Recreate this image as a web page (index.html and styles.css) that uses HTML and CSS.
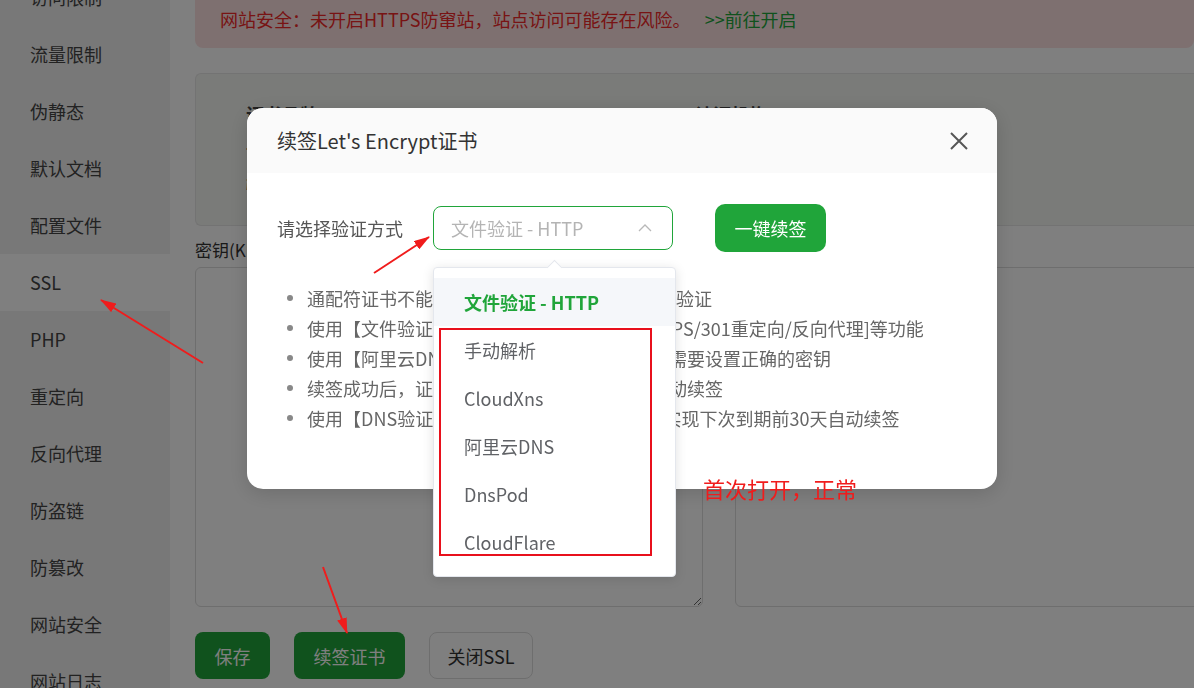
FILE: index.html
```html
<!DOCTYPE html>
<html>

<head>
    <meta charset="utf-8">
    <title>SSL</title>
    <link rel="stylesheet" href="styles.css">
</head>

<body>
    <div class="page">
        <div class="side">
            <div class="side-list">
                <div class="side-item">访问限制</div>
                <div class="side-item">流量限制</div>
                <div class="side-item">伪静态</div>
                <div class="side-item">默认文档</div>
                <div class="side-item">配置文件</div>
                <div class="side-item active">SSL</div>
                <div class="side-item">PHP</div>
                <div class="side-item">重定向</div>
                <div class="side-item">反向代理</div>
                <div class="side-item">防盗链</div>
                <div class="side-item">防篡改</div>
                <div class="side-item">网站安全</div>
                <div class="side-item">网站日志</div>
            </div>
        </div>
        <div class="main">
            <div class="alert">
                <span class="alert-text">网站安全：未开启HTTPS防窜站，站点访问可能存在风险。</span>
                <span class="alert-link">&gt;&gt;前往开启</span>
            </div>
            <div class="cert-info">
                <div class="cert-row">
                    <div class="cert-cell">证书品牌：<span class="green">Let's Encrypt</span></div>
                    <div class="cert-cell">认证机构：R10</div>
                </div>
                <div class="cert-row">
                    <div class="cert-cell">认证域名：www.example.com</div>
                    <div class="cert-cell">到期时间：2024-11-20</div>
                </div>
                <div class="cert-row">
                    <div class="cert-cell">强制HTTPS：<span class="switch"></span></div>
                </div>
            </div>
            <div class="key-row">
                <div class="key-col">
                    <div class="key-label">密钥(KEY)</div>
                    <textarea class="key-box"></textarea>
                </div>
                <div class="key-col wide">
                    <div class="key-label">证书(PEM格式)</div>
                    <textarea class="key-box"></textarea>
                </div>
            </div>
            <div class="actions">
                <button class="btn btn-green btn-save">保存</button>
                <button class="btn btn-green btn-renew">续签证书</button>
                <button class="btn btn-plain">关闭SSL</button>
            </div>
        </div>
    </div>

    <div class="mask"></div>

    <div class="dialog">
        <div class="dialog-head">
            <span class="dialog-title">续签Let's Encrypt证书</span>
            <svg class="dialog-close" width="20" height="20" viewBox="0 0 20 20">
                <path d="M2 2 L18 18 M18 2 L2 18" stroke="#555" stroke-width="2" fill="none" />
            </svg>
        </div>
        <div class="dialog-body">
            <div class="form-row">
                <span class="form-label">请选择验证方式</span>
                <div class="select">
                    <span class="select-text">文件验证 - HTTP</span>
                    <svg class="select-arrow" width="14" height="8" viewBox="0 0 14 8">
                        <path d="M1 7 L7 1 L13 7" stroke="#b8b8b8" stroke-width="1.3" fill="none" />
                    </svg>
                    <div class="dropdown">
                        <div class="dropdown-item selected">文件验证 - HTTP</div>
                        <div class="dropdown-item">手动解析</div>
                        <div class="dropdown-item">CloudXns</div>
                        <div class="dropdown-item">阿里云DNS</div>
                        <div class="dropdown-item">DnsPod</div>
                        <div class="dropdown-item">CloudFlare</div>
                    </div>
                </div>
                <button class="btn-renew-now">一键续签</button>
            </div>
            <ul class="tips">
                <li>通配符证书不能使用【文件验证】，请选择DNS验证</li>
                <li>使用【文件验证】时，请确保网站没开启[HTTPS/301重定向/反向代理]等功能</li>
                <li>使用【阿里云DNS】【DnsPod】等验证方式时需要设置正确的密钥</li>
                <li>续签成功后，证书将于到期前30天内由面板自动续签</li>
                <li>使用【DNS验证 - 手动解析】续签的证书无法实现下次到期前30天自动续签</li>
            </ul>
        </div>
    </div>

    <!-- annotations drawn on top of the screenshot -->
    <svg class="marks" width="1194" height="688" viewBox="0 0 1194 688">
        <defs>
            <marker id="head" markerWidth="8" markerHeight="5" refX="7.5" refY="2.5" orient="auto"
                markerUnits="strokeWidth">
                <path d="M0 0 L8 2.5 L0 5 Z" fill="#f01c1c" />
            </marker>
        </defs>
        <line x1="374" y1="273" x2="429" y2="237" stroke="#f01c1c" stroke-width="2" marker-end="url(#head)" />
        <line x1="203" y1="363" x2="101" y2="300" stroke="#f01c1c" stroke-width="2" marker-end="url(#head)" />
        <line x1="323" y1="567" x2="347" y2="633" stroke="#f01c1c" stroke-width="2" marker-end="url(#head)" />
    </svg>
    <div class="mark-box"></div>
    <div class="mark-text">首次打开，正常</div>
</body>

</html>
```

FILE: styles.css
```css
body {
    margin: 0;
    font-family: "Noto Sans CJK SC", "Microsoft YaHei", sans-serif;
    color: #333;
    overflow: hidden;
    width: 1194px;
    height: 688px;
}

.page {
    display: flex;
    height: 688px;
    overflow: hidden;
    background-color: #fff;
}

.side {
    width: 170px;
    flex-shrink: 0;
    background-color: #f0f0f0;
    overflow: hidden;
}

.side-list {
    margin-top: -31px;
}

.side-item {
    height: 57px;
    line-height: 57px;
    padding-left: 30px;
    font-size: 18px;
    color: #444;
}

.side-item.active {
    background-color: #fff;
}

.main {
    flex: 1;
    padding-left: 25px;
    overflow: hidden;
}

.alert {
    margin-top: -10px;
    height: 58px;
    line-height: 58px;
    padding-left: 25px;
    background-color: #fde1e1;
    border-radius: 0 0 8px 8px;
    font-size: 18px;
    white-space: nowrap;
}

.alert-text {
    color: #f02828;
}

.alert-link {
    color: #20a53a;
    margin-left: 10px;
}

.cert-info {
    margin-top: 25px;
    height: 153px;
    box-sizing: border-box;
    padding: 22px 50px 0;
    background-color: #f5f6f3;
    border: 1px solid #e6e6e6;
    border-radius: 6px 0 0 6px;
    border-right: 0;
}

.cert-row {
    display: flex;
    line-height: 36px;
    font-size: 18px;
    font-weight: bold;
    color: #444;
}

.cert-cell {
    width: 475px;
    white-space: nowrap;
}

.green {
    color: #20a53a;
}

.key-row {
    display: flex;
    gap: 32px;
    margin-top: 12px;
}

.key-col {
    width: 508px;
    flex-shrink: 0;
}

.key-col.wide {
    width: 520px;
}

.key-label {
    font-size: 17px;
    line-height: 24px;
    color: #333;
    margin-bottom: 5px;
}

.key-box {
    display: block;
    width: 100%;
    height: 340px;
    box-sizing: border-box;
    border: 1px solid #dcdcdc;
    border-radius: 6px;
    background-color: #fff;
}

.actions {
    display: flex;
    gap: 24px;
    margin-top: 25px;
}

.btn {
    height: 47px;
    border-radius: 8px;
    font-family: inherit;
    font-size: 18px;
    padding: 0;
}

.btn-green {
    background-color: #20a53a;
    border: 0;
    color: #fff;
}

.btn-save {
    width: 75px;
}

.btn-renew {
    width: 111px;
}

.btn-plain {
    width: 104px;
    background-color: #fff;
    border: 1px solid #dcdcdc;
    color: #333;
}

.mask {
    position: fixed;
    left: 0;
    top: 0;
    width: 100%;
    height: 100%;
    background-color: rgba(0, 0, 0, 0.5);
    z-index: 10;
}

.dialog {
    position: fixed;
    left: 247px;
    top: 108px;
    width: 750px;
    height: 381px;
    background-color: #fff;
    border-radius: 16px;
    box-shadow: 0 4px 20px rgba(0, 0, 0, 0.15);
    z-index: 20;
}

.dialog-head {
    height: 65px;
    display: flex;
    align-items: center;
    justify-content: space-between;
    padding: 0 28px 0 30px;
    background-color: #fafafa;
    border-radius: 16px 16px 0 0;
}

.dialog-title {
    font-size: 20px;
    color: #333;
}

.dialog-body {
    padding: 31px 30px 0;
}

.form-row {
    display: flex;
    align-items: center;
    height: 48px;
}

.form-label {
    font-size: 18px;
    color: #555;
    margin-right: 30px;
    white-space: nowrap;
}

.select {
    position: relative;
    width: 240px;
    height: 44px;
    box-sizing: border-box;
    border: 1px solid #20a53a;
    border-radius: 8px;
    display: flex;
    align-items: center;
    justify-content: space-between;
    padding: 0 20px 0 17px;
}

.select-text {
    font-size: 18px;
    color: #b4b4b4;
}

.dropdown {
    position: absolute;
    left: -1px;
    top: 60px;
    z-index: 5;
    width: 243px;
    box-sizing: border-box;
    padding: 10px 0;
    background-color: #fff;
    border: 1px solid #e4e7ed;
    border-radius: 4px;
    box-shadow: 0 2px 12px rgba(0, 0, 0, 0.12);
}

.dropdown::before {
    content: "";
    position: absolute;
    left: 115px;
    top: -6px;
    width: 10px;
    height: 10px;
    background-color: #fff;
    border-top: 1px solid #e4e7ed;
    border-left: 1px solid #e4e7ed;
    transform: rotate(45deg);
}

.dropdown-item {
    height: 48px;
    line-height: 48px;
    padding-left: 30px;
    font-size: 18px;
    color: #606266;
}

.dropdown-item.selected {
    background-color: #f5f7fa;
    color: #20a53a;
    font-weight: bold;
}

.btn-renew-now {
    margin-left: 42px;
    width: 111px;
    height: 48px;
    border: 0;
    border-radius: 10px;
    background-color: #20a53a;
    color: #fff;
    font-family: inherit;
    font-size: 18px;
    padding: 0;
}

.tips {
    list-style: none;
    margin: 31px 0 0;
    padding: 0;
}

.tips li {
    position: relative;
    padding-left: 30px;
    line-height: 30px;
    font-size: 18px;
    color: #666;
    white-space: nowrap;
}

.tips li::before {
    content: "";
    position: absolute;
    left: 10px;
    top: 12px;
    width: 6px;
    height: 6px;
    border-radius: 50%;
    background-color: #888;
}

.marks {
    position: fixed;
    left: 0;
    top: 0;
    z-index: 30;
    pointer-events: none;
}

.mark-box {
    position: fixed;
    left: 439px;
    top: 328px;
    width: 213px;
    height: 228px;
    box-sizing: border-box;
    border: 2px solid #e8101c;
    z-index: 30;
}

.mark-text {
    position: fixed;
    left: 703px;
    top: 475px;
    font-size: 22px;
    line-height: 26px;
    color: #f01c1c;
    z-index: 30;
}
```
